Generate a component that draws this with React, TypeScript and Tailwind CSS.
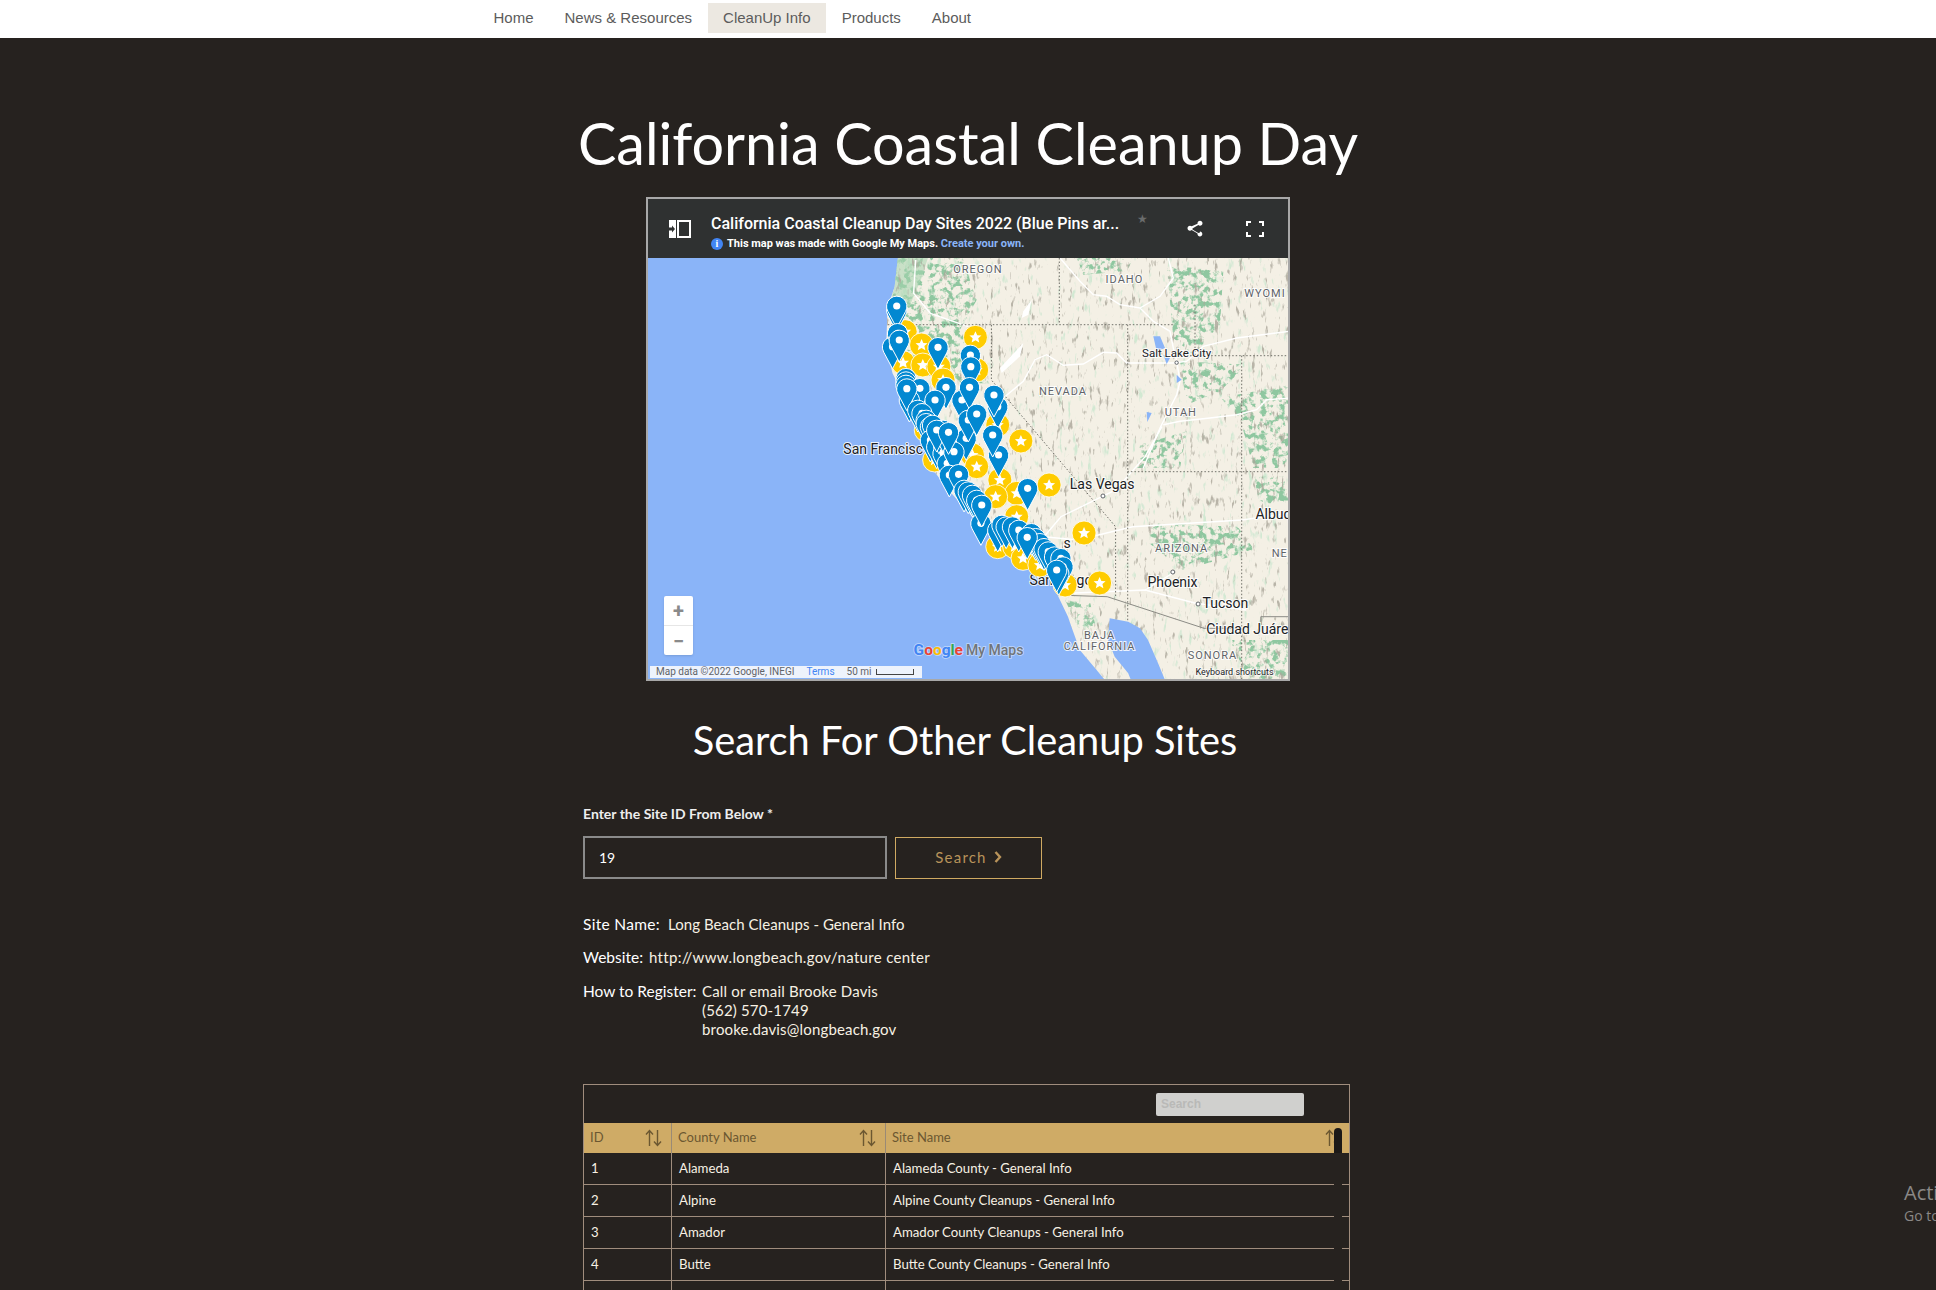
import React from 'react';

// map coordinates were read off crops, so convert them to map pixels here
const X = (z: number) => z / 2.376 - 8;
const Y = (z: number) => z / 3 - 8;
const pts = (list: number[][]) => list.map(([a, b]) => `${X(a).toFixed(1)},${Y(b).toFixed(1)}`).join(' ');
// same idea for the crop of the Nevada / Utah part of the map
const pts2 = (list: number[][]) => list.map(([a, b]) => `${(312 + a / 3).toFixed(1)},${(b / 3).toFixed(1)}`).join(' ');

const stars = [
  [630, 245], [797, 262], [669, 285], [625, 338], [672, 345], [710, 350], [800, 360], [720, 390], [850, 525], [680, 540],
  [905, 573], [790, 615], [700, 630], [800, 650], [855, 690], [972, 705], [895, 730], [845, 740], [895, 800], [1055, 849],
  [850, 890], [890, 890], [910, 925], [950, 945], [1010, 1005], [1092, 999],
];

const pins = [
  [600, 290], [610, 180], [610, 168], [612, 250], [616, 270], [708, 292], [785, 315], [786, 350], [632, 385], [632, 395],
  [632, 405], [665, 415], [727, 412], [640, 450], [634, 416], [765, 450], [850, 470], [783, 412], [841, 435], [701, 450],
  [660, 480], [670, 490], [680, 510], [680, 520], [690, 530], [695, 525], [700, 560], [690, 570], [705, 590], [720, 610],
  [730, 640], [775, 565], [780, 510], [800, 492], [710, 545], [720, 540], [705, 540], [746, 605], [733, 547],
  [852, 615], [838, 555], [735, 675], [757, 673], [770, 720], [780, 725], [790, 735], [800, 750], [810, 820], [812, 765], [921, 715],
  [850, 840], [860, 825], [870, 830], [885, 830], [900, 840], [930, 850], [940, 865], [950, 880], [960, 895], [970, 905], [985, 920],
  [1000, 925], [1005, 950], [920, 862], [995, 970], [990, 960],
];

const labels: [string, number, number, number, string, number?][] = [
  ['OREGON', 803, 68, 11, '#5f6368', 1],
  ['IDAHO', 1151, 98, 11, '#5f6368', 1],
  ['WYOMI', 1485, 142, 11, '#5f6368', 1],
  ['NEVADA', 1005, 434, 11, '#5f6368', 1],
  ['UTAH', 1285, 497, 11, '#5f6368', 1],
  ['ARIZONA', 1287, 905, 11, '#5f6368', 1],
  ['NE', 1520, 922, 11, '#5f6368', 1],
  ['BAJA', 1092, 1168, 11, '#5f6368', 1],
  ['CALIFORNIA', 1092, 1201, 11, '#5f6368', 1],
  ['SONORA', 1360, 1228, 11, '#5f6368', 1],
  ['Salt Lake City', 1275, 322, 11.5, '#202124'],
  ['Las Vegas', 1098, 718, 14, '#202124'],
  ['Albuq', 1505, 808, 14, '#202124'],
  ['Phoenix', 1265, 1011, 14, '#202124'],
  ['Tucson', 1391, 1075, 14, '#202124'],
  ['Ciudad Juáre', 1443, 1152, 14, '#202124'],
];

const Pin = ({ x, y }: { x: number; y: number }) => (
  <g transform={`translate(${X(x)} ${Y(y)})`}>
    <path d="M0 22 L-8.8 5.5 A10.2 10.2 0 1 1 8.8 5.5 Z" fill="#0288d1" stroke="#fff" strokeWidth="1" strokeLinejoin="round" />
    <circle r="3.6" fill="#fff" />
  </g>
);

const StarPin = ({ x, y }: { x: number; y: number }) => (
  <g transform={`translate(${X(x)} ${Y(y)})`}>
    <circle r="12" fill="#ffcc00" stroke="#fff" strokeOpacity="0.8" strokeWidth="1" />
    <path d="M0 -6 L1.8 -2 L6 -1.8 L2.8 1 L3.8 5.2 L0 3 L-3.8 5.2 L-2.8 1 L-6 -1.8 L-1.8 -2 Z" fill="#fff" />
  </g>
);

const MapArt = () => (
  <svg width="640" height="421" viewBox="0 0 640 421" className="absolute inset-0 block">
    <defs>
      <filter id="relief" x="0" y="0" width="100%" height="100%">
        <feTurbulence type="fractalNoise" baseFrequency="0.24 0.08" numOctaves="3" seed="7" />
        <feColorMatrix values="0 0 0 0 0.40  0 0 0 0 0.38  0 0 0 0 0.32  0 6 0 0 -3.75" />
      </filter>
      <filter id="greenStreaks" x="0" y="0" width="100%" height="100%">
        <feTurbulence type="fractalNoise" baseFrequency="0.2 0.07" numOctaves="3" seed="21" />
        <feColorMatrix values="0 0 0 0 0.55  0 0 0 0 0.78  0 0 0 0 0.60  0 6 0 0 -3.8" />
      </filter>
      <filter id="mottle" x="0" y="0" width="100%" height="100%">
        <feTurbulence type="fractalNoise" baseFrequency="0.16" numOctaves="3" seed="11" result="n" />
        <feColorMatrix in="n" values="0 0 0 0 0  0 0 0 0 0  0 0 0 0 0  0 6 0 0 -2.9" result="m" />
        <feComposite in="SourceGraphic" in2="m" operator="in" />
      </filter>
      <clipPath id="land">
        <polygon
          points={pts([
            [615, 0], [605, 110], [588, 175], [585, 290], [600, 370], [640, 470], [670, 560], [690, 650], [740, 730],
            [790, 800], [850, 830], [935, 890], [994, 1040], [1017, 1100], [1025, 1130], [1045, 1200], [1085, 1260],
            [1108, 1295], [1550, 1295], [1550, 0],
          ])}
        />
      </clipPath>
    </defs>
    <rect width="640" height="421" fill="#8ab4f8" />
    <g clipPath="url(#land)">
      <rect width="640" height="421" fill="#f4f0e5" />
      <rect width="640" height="421" filter="url(#greenStreaks)" opacity="0.7" />
      <g filter="url(#mottle)" fill="#8fc7a0">
        <polygon points={pts([[600, 0], [760, 0], [800, 150], [760, 240], [830, 400], [740, 400], [600, 350]])} />
        <polygon points={pts2([[350, 0], [520, 0], [500, 40], [370, 50]])} />
        <polygon points={pts2([[620, 20], [790, 40], [780, 200], [700, 290], [640, 240]])} />
        <polygon points={pts2([[660, 310], [860, 320], [780, 400], [680, 440]])} />
        <polygon points={pts2([[780, 420], [990, 380], [990, 630], [880, 630], [840, 480]])} />
        <polygon points={pts2([[540, 560], [680, 520], [660, 630], [530, 630]])} />
        <polygon points={pts([[1210, 820], [1420, 830], [1460, 900], [1290, 960], [1210, 880]])} />
        <polygon points={pts([[1460, 680], [1550, 680], [1550, 760], [1470, 760]])} />
        <polygon points={pts([[1400, 1170], [1550, 1170], [1550, 1295], [1450, 1295]])} />
        <polygon points={pts([[1010, 1050], [1070, 1060], [1090, 1170], [1040, 1130]])} />
      </g>
      <polygon points={pts([[610, 0], [690, 0], [670, 80], [640, 170], [600, 170]])} fill="#a6d4ae" opacity="0.55" />
      <rect width="640" height="421" filter="url(#relief)" opacity="0.8" />
      <polygon points={pts2([[190, 160], [215, 125], [205, 170], [185, 180]])} fill="#fff" />
      <polygon points={pts2([[120, 330], [190, 255], [180, 295], [125, 345]])} fill="#fff" />
      <g fill="none" stroke="#fff" strokeWidth="1.4">
        <polyline points={pts([[655, 30], [650, 130], [690, 190], [780, 230]])} />
        <polyline points={pts2([[300, 0], [360, 70], [400, 110], [440, 115], [480, 140], [540, 150], [600, 115], [640, 60], [625, 0]])} />
        <polyline points={pts2([[540, 150], [580, 190], [630, 220], [640, 270], [650, 310], [660, 370], [650, 410], [600, 510], [550, 630]])} />
        <polyline points={pts2([[130, 420], [190, 370], [225, 305], [260, 290], [310, 322], [370, 318], [430, 283], [470, 285], [500, 315], [640, 315], [680, 310], [730, 265], [830, 240], [990, 220]])} />
        <polyline points={pts2([[610, 500], [660, 490], [750, 480], [830, 470], [890, 455], [920, 425], [990, 420]])} />
        <polyline points={pts([[1240, 530], [1200, 620], [1130, 720], [1000, 800], [960, 860]])} />
        <polyline points={pts([[960, 860], [1040, 870], [1170, 830], [1430, 810], [1540, 790]])} />
        <polyline points={pts([[1020, 1030], [1200, 1020], [1320, 1060], [1440, 1080]])} />
        <polyline points={pts([[1265, 970], [1200, 1020]])} />
      </g>
      <g fill="none" stroke="#6f6f68" strokeWidth="1" strokeDasharray="1.5 2">
        <polyline points={pts2([[-500, 200], [640, 200]])} />
        <polyline points={pts2([[298, 0], [298, 200]])} />
        <polyline points={pts2([[503, 200], [503, 630], [503, 1200]])} />
        <polyline points={pts2([[680, 293], [990, 293]])} />
        <polyline points={pts2([[705, 140], [705, 293]])} />
        <polyline points={pts2([[845, 293], [845, 1300]])} />
        <polyline points={pts([[835, 225], [835, 390], [1130, 830], [1130, 1040]])} />
        <polyline points={pts([[1158, 665], [1540, 665]])} />
      </g>
      <polyline points={pts([[990, 1035], [1110, 1040], [1340, 1135], [1430, 1135]])} fill="none" stroke="#8b8b85" strokeWidth="1" />
      <polyline points={pts([[1475, 1130], [1475, 1100], [1540, 1100]])} fill="none" stroke="#8b8b85" strokeWidth="1" />
      <polygon
        points={pts([
          [1116, 1105], [1160, 1115], [1188, 1135], [1207, 1170], [1231, 1240], [1249, 1295], [1168, 1295], [1160, 1270],
          [1128, 1220], [1112, 1170],
        ])}
        fill="#8ab4f8"
      />
      <polygon points={pts2([[580, 235], [600, 235], [615, 270], [590, 280]])} fill="#8ab4f8" />
      <polygon points={pts2([[610, 290], [630, 300], [620, 318]])} fill="#8ab4f8" />
      <polygon points={pts2([[650, 350], [665, 365], [650, 375]])} fill="#8ab4f8" />
      <polygon points={pts2([[560, 462], [575, 465], [562, 492]])} fill="#8ab4f8" />
    </g>
    <g fontFamily="Roboto, sans-serif" textAnchor="middle" stroke="#fff" strokeWidth="2" strokeOpacity="0.85" paintOrder="stroke">
      {labels.map(([text, x, y, size, color, spaced]) => (
        <text key={text} x={X(x)} y={Y(y)} fontSize={size} fill={color} letterSpacing={spaced ? 1 : 0}>
          {text}
        </text>
      ))}
      <text x={X(578)} y={Y(612)} fontSize="14" fill="#202124">San Francisc</text>
      <text x={X(1000)} y={Y(1004)} fontSize="14" fill="#202124">San Diego</text>
      <text x={X(1015)} y={Y(895)} fontSize="14" fill="#202124">s</text>
    </g>
    <g fill="none" stroke="#5f6368" strokeWidth="1">
      <circle cx={X(1100)} cy={Y(738)} r="2" fill="#fff" />
      <circle cx={X(1275)} cy={Y(338)} r="1.7" fill="#fff" />
      <circle cx={X(1266)} cy={Y(966)} r="2" fill="#fff" />
      <circle cx={X(1326)} cy={Y(1062)} r="2" fill="#fff" />
    </g>
    {stars.map(([x, y]) => <StarPin key={`s${x}-${y}`} x={x} y={y} />)}
    {pins.map(([x, y]) => <Pin key={`p${x}-${y}`} x={x} y={y} />)}
    <text x={X(650)} y={Y(1215)} fontFamily="Roboto, sans-serif" fontSize="15.5" fontWeight="700" stroke="#fff" strokeOpacity="0.5" strokeWidth="1.6" paintOrder="stroke">
      <tspan fill="#4285f4">G</tspan>
      <tspan fill="#ea4335">o</tspan>
      <tspan fill="#fbbc05">o</tspan>
      <tspan fill="#4285f4">g</tspan>
      <tspan fill="#34a853">l</tspan>
      <tspan fill="#ea4335">e</tspan>
      <tspan fill="#70757a" fontWeight="500" dx="3" fontSize="14">My Maps</tspan>
    </text>
    <text x={X(1320)} y={Y(1274)} fontFamily="Roboto, sans-serif" fontSize="9" fill="#202124" stroke="#fff" strokeOpacity="0.7" strokeWidth="1.5" paintOrder="stroke">
      Keyboard shortcuts
    </text>
  </svg>
);

const SortArrows = () => (
  <svg width="17" height="18" viewBox="0 0 17 18" fill="none" stroke="#6b5731" strokeWidth="1.4">
    <path d="M4.5 17V2M1 5.5L4.5 1.5L8 5.5" />
    <path d="M12.5 1V16M9 12.5L12.5 16.5L16 12.5" />
  </svg>
);

const rows = [
  ['1', 'Alameda', 'Alameda County - General Info'],
  ['2', 'Alpine', 'Alpine County Cleanups - General Info'],
  ['3', 'Amador', 'Amador County Cleanups - General Info'],
  ['4', 'Butte', 'Butte County Cleanups - General Info'],
  ['5', 'Calaveras', 'Calaveras County Cleanups - General Info'],
];

const navItems = ['Home', 'News & Resources', 'CleanUp Info', 'Products', 'About'];

export default function App() {
  return (
    <div className="relative h-[1290px] overflow-hidden bg-[#26221f] font-['Lato',sans-serif] text-white">
      <nav className="h-[38px] bg-white pl-[478px] pt-[3px] font-['Liberation_Sans',sans-serif] text-[15px] text-[#5c5c5c]">
        <ul className="flex">
          {navItems.map((item) => (
            <li
              key={item}
              className={`flex h-[30px] items-center px-[15.5px] pt-[1px] ${item === 'CleanUp Info' ? 'bg-[#ece8e1]' : ''}`}
            >
              {item}
            </li>
          ))}
        </ul>
      </nav>

      <h1 className="mt-[69px] text-center text-[57.5px] font-normal leading-[72px]">
        California Coastal Cleanup Day
      </h1>

      <div className="mx-auto mt-[18px] flex h-[484px] w-[644px] flex-col border-2 border-[#a8a8a8]">
        <div className="relative h-[59px] shrink-0 bg-[#2f3131] font-['Roboto',sans-serif]">
          <svg width="22" height="18" viewBox="0 0 22 18" className="absolute left-[21px] top-[21px]">
            <rect x="9" y="1" width="12" height="16" fill="none" stroke="#fff" strokeWidth="2" />
            <rect x="0" y="0" width="7" height="18" fill="#fff" />
            <path d="M0 7.5H3V5.5L6 9L3 12.5V10.5H0Z" fill="#2f3131" />
          </svg>
          <div className="absolute left-[63px] top-[16px] text-[16px] font-medium leading-[18px] text-white">
            California Coastal Cleanup Day Sites 2022 (Blue Pins ar...
          </div>
          <div className="absolute left-[63px] top-[38px] flex items-center gap-[4px] text-[11px] font-bold leading-[14px] text-white">
            <span className="flex h-[12px] w-[12px] items-center justify-center rounded-full bg-[#4285f4] font-['Liberation_Serif',serif] text-[10px]">
              i
            </span>
            <span>
              This map was made with Google My Maps. <span className="text-[#8ab4f8]">Create your own.</span>
            </span>
          </div>
          <span className="absolute left-[489px] top-[13px] text-[12px] leading-[14px] text-[#6a6c6c]">★</span>
          <svg width="20" height="20" viewBox="0 0 24 24" fill="#fff" className="absolute left-[537px] top-[20px]">
            <path d="M18 16.1c-.8 0-1.4.3-2 .8l-7.1-4.2c.1-.2.1-.5.1-.7s0-.5-.1-.7L16 7.2c.5.5 1.2.8 2 .8 1.7 0 3-1.3 3-3s-1.3-3-3-3-3 1.3-3 3c0 .2 0 .5.1.7L8 8.8C7.5 8.3 6.8 8 6 8c-1.7 0-3 1.3-3 3s1.3 3 3 3c.8 0 1.5-.3 2-.8l7.1 4.2c-.1.2-.1.4-.1.6 0 1.6 1.3 2.9 2.9 2.9s2.9-1.3 2.9-2.9-1.2-2.9-2.9-2.9z" />
          </svg>
          <svg width="18" height="16" viewBox="0 0 18 16" fill="none" stroke="#fff" strokeWidth="2" className="absolute left-[598px] top-[22px]">
            <path d="M1 5V1H5M13 1H17V5M17 11V15H13M5 15H1V11" />
          </svg>
        </div>
        <div className="relative flex-1 overflow-hidden font-['Roboto',sans-serif]">
          <MapArt />
          <div className="absolute left-[16px] top-[338px] flex h-[59px] w-[29px] flex-col rounded-[2px] bg-white text-[#8a8a8a] shadow">
            <span className="flex h-[30px] items-center justify-center border-b border-[#e6e6e6] text-[20px] font-bold leading-none">+</span>
            <span className="flex flex-1 items-center justify-center text-[20px] font-bold leading-none">−</span>
          </div>
          <div className="absolute left-[2px] top-[408px] flex h-[12px] w-[272px] items-center whitespace-nowrap bg-[#eef3fc] pl-[6px] text-[10px] leading-none text-[#5f6368]">
            <span>Map data ©2022 Google, INEGI</span>
            <span className="ml-[12px] text-[#4285f4]">Terms</span>
            <span className="ml-[12px]">50 mi</span>
            <span className="ml-[5px] h-[6px] w-[38px] border-x border-b border-[#444]" />
          </div>
        </div>
      </div>

      <h2 className="mt-[34px] pr-[6px] text-center text-[39.8px] font-normal leading-[50px]">
        Search For Other Cleanup Sites
      </h2>

      <section className="ml-[583px] mt-[40px] w-[767px]">
        <label className="block text-[14px] font-bold leading-[18px] text-[#eee]">Enter the Site ID From Below *</label>
        <div className="mt-[13px] flex gap-[8px]">
          <div className="flex h-[43px] w-[304px] items-center border-2 border-[#8a8a8a] pl-[14px] text-[14px]">19</div>
          <button className="mt-[1px] flex h-[42px] w-[147px] items-center justify-center gap-[7px] border border-[#d0aa62] pb-[2px] text-[15px] font-normal tracking-[1.2px] text-[#b8935a]">
            Search
            <svg width="8" height="12" viewBox="0 0 8 12" fill="none" stroke="#b8935a" strokeWidth="2.4">
              <path d="M1.5 1L6 6L1.5 11" />
            </svg>
          </button>
        </div>

        <div className="mt-[35px] flex h-[20px] items-center text-[15.5px] leading-[20px]">
          <span className="w-[85px] tracking-[0.3px]">Site Name:</span>
          <span className="text-[15px] font-normal tracking-[0.05px] text-[#f7f1e4]">Long Beach Cleanups - General Info</span>
        </div>
        <div className="mt-[13px] flex h-[20px] items-center text-[15.5px] leading-[20px]">
          <span className="w-[66px]">Website:</span>
          <span className="text-[15px] font-normal tracking-[0.32px] text-[#f7f1e4]">http://www.longbeach.gov/nature center</span>
        </div>
        <div className="mt-[15px] flex text-[15.5px] leading-[19px]">
          <span className="w-[119px]">How to Register:</span>
          <span className="text-[15px] font-normal tracking-[0.17px] text-[#f7f1e4]">
            Call or email Brooke Davis
            <br />
            (562) 570-1749
            <br />
            brooke.davis@longbeach.gov
          </span>
        </div>

        <div className="relative mt-[45px] border-x border-t border-[#a08d7d]">
          <div className="flex h-[38px] items-start justify-end pr-[45px] pt-[8px]">
            <div className="h-[23px] w-[148px] rounded-[2px] bg-[#d0d0ce] pl-[5px] font-['Liberation_Sans',sans-serif] text-[12px] font-bold leading-[23px] text-[#b9b9b7]">
              Search
            </div>
          </div>
          <div className="grid h-[30px] grid-cols-[88px_214px_1fr] items-stretch bg-[#cfab66] text-[13px] font-normal text-[#6b5731]">
            <div className="flex items-center justify-between border-r border-[#9a8a75] pl-[6px] pr-[9px]">
              ID <SortArrows />
            </div>
            <div className="flex items-center justify-between border-r border-[#9a8a75] pl-[6px] pr-[9px]">
              County Name <SortArrows />
            </div>
            <div className="flex items-center justify-between pl-[6px] pr-[7px]">
              Site Name <SortArrows />
            </div>
          </div>
          {rows.map((row) => (
            <div key={row[0]} className="grid h-[32px] grid-cols-[88px_214px_1fr] border-b border-[#a08d7d] text-[13.2px] font-normal text-[#f7f1e4]">
              <div className="flex items-center border-r border-[#a08d7d] pl-[7px]">{row[0]}</div>
              <div className="flex items-center border-r border-[#a08d7d] pl-[7px]">{row[1]}</div>
              <div className="flex items-center pl-[7px]">{row[2]}</div>
            </div>
          ))}
          <div className="absolute bottom-0 right-[7px] top-[68px] w-[8px] bg-[#26221f]" />
          <div className="absolute right-[7px] top-[43px] h-[25px] w-[8px] rounded-t-[4px] bg-[#1c1917]" />
        </div>
      </section>

      <div className="absolute left-[1904px] top-[1180px] whitespace-nowrap font-['Open_Sans',sans-serif] text-[#8a8886]">
        <div className="text-[20px] leading-[26px]">Activate Windows</div>
        <div className="text-[14px] leading-[20px]">Go to Settings</div>
      </div>
    </div>
  );
}
